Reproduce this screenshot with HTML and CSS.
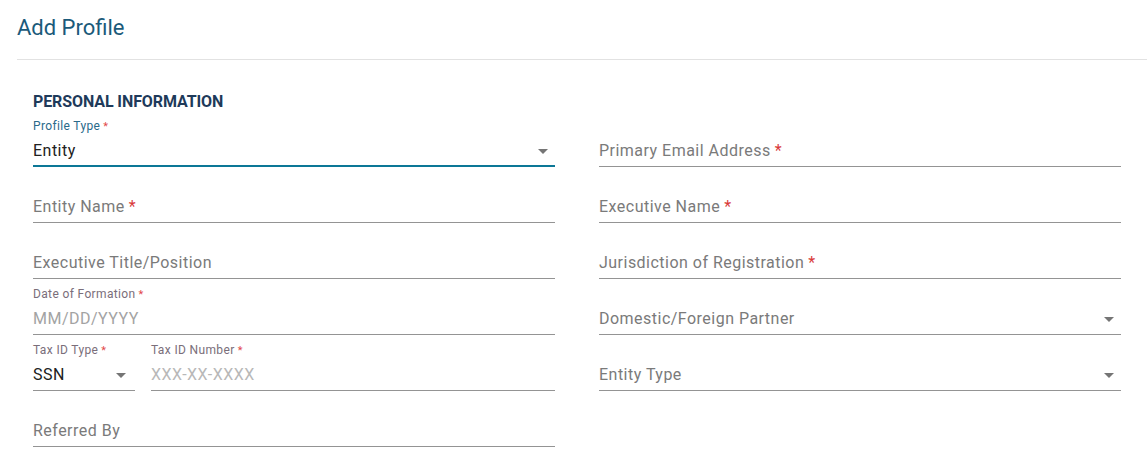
FILE: index.html
```html
<!DOCTYPE html>
<html>
<head>
<meta charset="utf-8">
<link rel="stylesheet" href="styles.css">
</head>
<body>
<div class="page">
  <header class="page-header">
    <h1 class="page-title">Add Profile</h1>
  </header>
  <section class="section">
    <h2 class="section-title">PERSONAL INFORMATION</h2>
    <div class="form-grid">
      <div class="field field-focused field-select">
        <label class="float-label">Profile Type<span class="req">*</span></label>
        <div class="value">Entity</div>
        <span class="arrow"></span>
      </div>
      <div class="field">
        <div class="placeholder-label">Primary Email Address<span class="req">*</span></div>
      </div>

      <div class="field">
        <div class="placeholder-label">Entity Name<span class="req">*</span></div>
      </div>
      <div class="field">
        <div class="placeholder-label">Executive Name<span class="req">*</span></div>
      </div>

      <div class="field">
        <div class="placeholder-label">Executive Title/Position</div>
      </div>
      <div class="field">
        <div class="placeholder-label">Jurisdiction of Registration<span class="req">*</span></div>
      </div>

      <div class="field">
        <label class="float-label muted">Date of Formation<span class="req">*</span></label>
        <div class="value hint">MM/DD/YYYY</div>
      </div>
      <div class="field field-select">
        <div class="placeholder-label">Domestic/Foreign Partner</div>
        <span class="arrow"></span>
      </div>

      <div class="tax-row">
        <div class="field field-select tax-type">
          <label class="float-label muted">Tax ID Type<span class="req">*</span></label>
          <div class="value">SSN</div>
          <span class="arrow"></span>
        </div>
        <div class="field tax-number">
          <label class="float-label muted">Tax ID Number<span class="req">*</span></label>
          <div class="value hint light">XXX-XX-XXXX</div>
        </div>
      </div>
      <div class="field field-select">
        <div class="placeholder-label">Entity Type</div>
        <span class="arrow"></span>
      </div>

      <div class="field">
        <div class="placeholder-label">Referred By</div>
      </div>
    </div>
  </section>
</div>
</body>
</html>
```

FILE: styles.css
```css
html, body {
  margin: 0;
  padding: 0;
  background: #ffffff;
}

body {
  font-family: Roboto, "Liberation Sans", Arial, sans-serif;
  color: #212121;
}

.page {
  width: 1148px;
}

.page-header {
  margin: 0 1px 0 17px;
  padding: 14px 0 17px;
  border-bottom: 1px solid #e2e2e2;
}

.page-title {
  margin: 0;
  font-size: 22px;
  line-height: 28px;
  font-weight: 400;
  letter-spacing: 0;
  color: #1b5a7a;
}

.section {
  padding: 33px 0 0 33px;
}

.section-title {
  margin: 0;
  font-size: 16px;
  line-height: 18px;
  font-weight: 700;
  color: #1e3a5a;
  letter-spacing: -0.1px;
}

.form-grid {
  display: grid;
  grid-template-columns: 522px 522px;
  column-gap: 44px;
  grid-auto-rows: 56px;
}

.field {
  position: relative;
  box-sizing: border-box;
  height: 56px;
  border-bottom: 1px solid #949494;
}

.field-focused {
  border-bottom: 2px solid #0c7796;
}

.float-label {
  position: absolute;
  left: 0;
  top: 7px;
  font-size: 12px;
  line-height: 16px;
  letter-spacing: 0.03em;
  white-space: nowrap;
  color: #2a6a8a;
}

.float-label.muted {
  color: #7a6e7a;
}

.req {
  color: #e2474a;
  margin-left: 3px;
  font-size: 11px;
}

.placeholder-label .req {
  font-size: 16px;
  margin-left: 4px;
  color: #d93a3a;
}

.value,
.placeholder-label {
  position: absolute;
  left: 0;
  top: 28px;
  font-size: 16px;
  line-height: 24px;
  letter-spacing: 0.03em;
  white-space: nowrap;
}

.value {
  color: #212121;
}

.value.hint {
  color: #a3a3a3;
}

.value.hint.light {
  color: #b8b8b8;
}

.placeholder-label {
  color: #7a7a7a;
}

.arrow {
  position: absolute;
  right: 7px;
  top: 38px;
  width: 0;
  height: 0;
  border-left: 5px solid transparent;
  border-right: 5px solid transparent;
  border-top: 5px solid #757575;
}

.tax-row {
  display: flex;
  gap: 16px;
}

.tax-type {
  width: 102px;
  flex: none;
}

.tax-type .arrow {
  right: 9px;
}

.tax-number {
  flex: 1;
}
```
